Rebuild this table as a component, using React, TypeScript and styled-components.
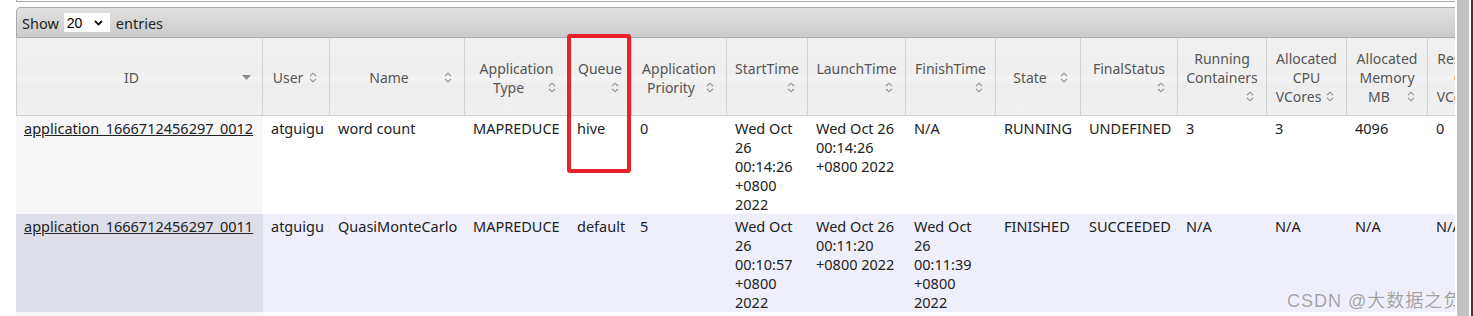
import React from 'react';
import styled, { createGlobalStyle } from 'styled-components';

const GlobalStyle = createGlobalStyle`
  html, body {
    margin: 0;
    padding: 0;
    background: #fff;
    overflow: hidden;
  }
  body {
    font-family: "Noto Sans", "Open Sans", sans-serif;
  }
`;

type Column = { label: string; width: number; sorted?: boolean };

const columns: Column[] = [
  { label: 'ID', width: 247, sorted: true },
  { label: 'User', width: 67 },
  { label: 'Name', width: 135 },
  { label: 'Application Type', width: 104 },
  { label: 'Queue', width: 63 },
  { label: 'Application Priority', width: 95 },
  { label: 'StartTime', width: 81 },
  { label: 'LaunchTime', width: 98 },
  { label: 'FinishTime', width: 90 },
  { label: 'State', width: 85 },
  { label: 'FinalStatus', width: 97 },
  { label: 'Running Containers', width: 89 },
  { label: 'Allocated CPU VCores', width: 80 },
  { label: 'Allocated Memory MB', width: 81 },
  { label: 'Reserved CPU VCores', width: 80 },
  { label: 'Reserved Memory MB', width: 81 },
  { label: '% of Queue', width: 72 },
  { label: '% of Cluster', width: 72 },
  { label: 'Progress', width: 90 },
  { label: 'Tracking UI', width: 96 },
  { label: 'Blacklisted Nodes', width: 90 },
];

const apps = [
  [
    'application_1666712456297_0012', 'atguigu', 'word count', 'MAPREDUCE', 'hive', '0',
    'Wed Oct 26 00:14:26 +0800 2022', 'Wed Oct 26 00:14:26 +0800 2022', 'N/A',
    'RUNNING', 'UNDEFINED', '3', '3', '4096', '0', '0', '50.0', '50.0', '', 'ApplicationMaster', '0',
  ],
  [
    'application_1666712456297_0011', 'atguigu', 'QuasiMonteCarlo', 'MAPREDUCE', 'default', '5',
    'Wed Oct 26 00:10:57 +0800 2022', 'Wed Oct 26 00:11:20 +0800 2022', 'Wed Oct 26 00:11:39 +0800 2022',
    'FINISHED', 'SUCCEEDED', 'N/A', 'N/A', 'N/A', 'N/A', 'N/A', '0.0', '0.0', '', 'History', 'N/A',
  ],
  [
    'application_1666712456297_0010', 'atguigu', 'word count', 'MAPREDUCE', 'default', '0',
    'Wed Oct 26 00:05:12 +0800 2022', 'Wed Oct 26 00:05:30 +0800 2022', 'Wed Oct 26 00:05:51 +0800 2022',
    'FINISHED', 'SUCCEEDED', 'N/A', 'N/A', 'N/A', 'N/A', 'N/A', '0.0', '0.0', '', 'History', 'N/A',
  ],
];

const tableWidth = columns.reduce((s, c) => s + c.width, 0);

const Page = styled.div`
  display: flex;
  width: 100%;
  height: 100vh;
  overflow: hidden;
`;

const Main = styled.div`
  position: relative;
  flex: 1;
  min-width: 0;
  overflow: hidden;
  padding-left: 16px;
  box-sizing: border-box;
`;

const ScrollStrip = styled.div`
  flex: none;
  width: 18px;
  background: linear-gradient(
    to right,
    #fff 0 2px,
    #c2c2c2 2px 14px,
    #fff 14px 16px,
    #3a3a3a 16px 18px
  );
`;

const Wrapper = styled.div<{ $w: number }>`
  width: ${(p) => p.$w}px;
`;

const TopRule = styled.div`
  height: 1px;
  border-left: 1px solid #aaa;
  border-bottom: 1px solid #aaa;
  margin-bottom: 5px;
`;

const Toolbar = styled.div`
  display: flex;
  align-items: center;
  height: 29px;
  padding: 0 5px;
  border: 1px solid #aaa;
  border-top-left-radius: 4px;
  background: linear-gradient(#e1e1e1, #cbcbcb);
  font-size: 14.5px;
  color: #222;
`;

const SelectBox = styled.span`
  position: relative;
  display: inline-flex;
  width: 46px;
  height: 19px;
  margin: 0 6px 0 5px;
  background: #fff;
`;

const LengthSelect = styled.select`
  appearance: none;
  border: none;
  outline: none;
  background: transparent;
  width: 100%;
  padding: 0 0 0 3px;
  font: 14px "Liberation Sans", Arial, sans-serif;
  color: #000;
`;

const Chevron = styled.svg`
  position: absolute;
  right: 7px;
  top: 7px;
  pointer-events: none;
`;

const Table = styled.table<{ $w: number }>`
  width: ${(p) => p.$w}px;
  table-layout: fixed;
  border-collapse: separate;
  border-spacing: 0;
  font-size: 14.5px;
  line-height: 19px;
`;

const Col = styled.col<{ $w: number }>`
  width: ${(p) => p.$w}px;
`;

const Th = styled.th`
  padding: 11px 8px 9px;
  vertical-align: middle;
  text-align: center;
  font-size: 14px;
  font-weight: normal;
  color: #555;
  background: linear-gradient(
    to bottom,
    #f0f0f0 0%,
    #efefef 46%,
    #f4f4f4 52%,
    #eeeeee 60%,
    #f0f0f0 100%
  );
  border-right: 1px solid #d3d3d3;
  border-bottom: 1px solid #d3d3d3;
  &:first-child {
    border-left: 1px solid #d3d3d3;
  }
`;

const SortIcon = styled.span`
  float: right;
  width: 16px;
  height: 19px;
  display: flex;
  align-items: center;
  justify-content: center;
`;

const Td = styled.td<{ $even: boolean; $sorted: boolean }>`
  padding: 3px 10px 0 8px;
  vertical-align: top;
  color: #222;
  background: ${(p) =>
    p.$even ? (p.$sorted ? '#dedee8' : '#efeffb') : p.$sorted ? '#f6f6f6' : '#fff'};
`;

const AppLink = styled.a`
  color: #222;
  text-decoration: underline;
  white-space: nowrap;
`;

const Annotation = styled.div`
  position: absolute;
  left: 567px;
  top: 34px;
  width: 64px;
  height: 139px;
  box-sizing: border-box;
  border: 4px solid #e8212a;
  border-radius: 3px;
  pointer-events: none;
`;

const Watermark = styled.div`
  position: absolute;
  left: 1287px;
  top: 286px;
  font: 18px "Liberation Sans", "Noto Sans CJK SC", sans-serif;
  letter-spacing: 1px;
  color: rgba(128, 128, 128, 0.72);
  text-shadow: 0 0 1px rgba(255, 255, 255, 0.9);
  white-space: nowrap;
  pointer-events: none;
`;

const SortBoth = () => (
  <svg width="8" height="11" viewBox="0 0 8 11">
    <path d="M1 4.2 L4 1.2 L7 4.2 M1 6.8 L4 9.8 L7 6.8" fill="none" stroke="#8c8c8c" strokeWidth="1.1" />
  </svg>
);

const SortDesc = () => (
  <svg width="9" height="5" viewBox="0 0 9 5">
    <path d="M0 0 H9 L4.5 5 Z" fill="#8a8a8a" />
  </svg>
);

const App: React.FC = () => {
  return (
    <Page>
      <GlobalStyle />
      <Main>
        <Wrapper $w={tableWidth}>
          <TopRule />
          <Toolbar>
            Show
            <SelectBox>
              <LengthSelect defaultValue="20">
                <option value="20">20</option>
                <option value="40">40</option>
                <option value="60">60</option>
                <option value="80">80</option>
                <option value="100">100</option>
              </LengthSelect>
              <Chevron width="9" height="6" viewBox="0 0 9 6">
                <path d="M1 1 L4.5 4.5 L8 1" fill="none" stroke="#111" strokeWidth="1.8" />
              </Chevron>
            </SelectBox>
            entries
          </Toolbar>
          <Table $w={tableWidth}>
            <colgroup>
              {columns.map((c) => (
                <Col key={c.label} $w={c.width} />
              ))}
            </colgroup>
            <thead>
              <tr>
                {columns.map((c) => (
                  <Th key={c.label}>
                    {c.label}
                    <SortIcon>{c.sorted ? <SortDesc /> : <SortBoth />}</SortIcon>
                  </Th>
                ))}
              </tr>
            </thead>
            <tbody>
              {apps.map((row, r) => (
                <tr key={row[0]}>
                  {row.map((cell, i) => (
                    <Td key={i} $even={r % 2 === 1} $sorted={i === 0}>
                      {i === 0 ? <AppLink href="#">{cell}</AppLink> : cell}
                    </Td>
                  ))}
                </tr>
              ))}
            </tbody>
          </Table>
        </Wrapper>
        <Annotation />
        <Watermark>CSDN @大数据之负</Watermark>
      </Main>
      <ScrollStrip />
    </Page>
  );
};

export default App;
